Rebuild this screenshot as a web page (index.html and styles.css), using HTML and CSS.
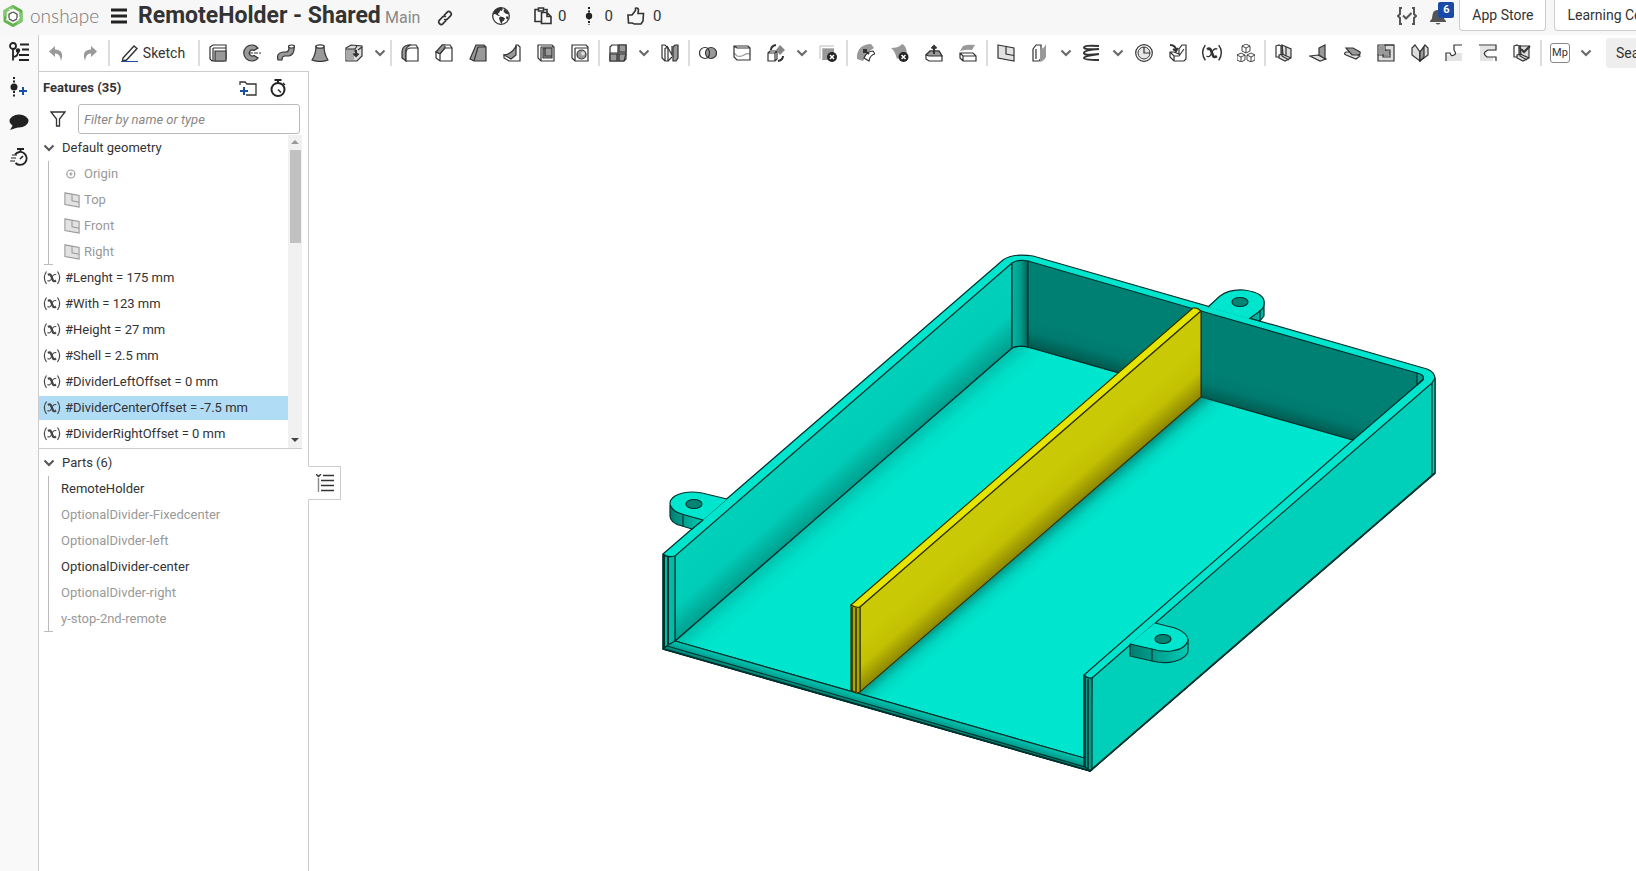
FILE: index.html
```html
<!DOCTYPE html>
<html lang="en">
<head>
<meta charset="utf-8">
<title>RemoteHolder - Shared</title>
<link rel="stylesheet" href="styles.css">
</head>
<body>
<svg class="defs" aria-hidden="true">
  <symbol id="chev" viewBox="0 0 12 8"><path d="M1.500 1.500L6 6l4.500-4.500" fill="none" stroke="currentColor" stroke-width="2"/></symbol>
  <symbol id="plane" viewBox="0 0 18 18"><path d="M1 1l16 3v13L1 14z" fill="#e2e2e2" stroke="currentColor" stroke-width="1.200"/><path d="M9 2.500V10l8 1.500" fill="none" stroke="currentColor" stroke-width="1.200"/></symbol>
  <symbol id="varx" viewBox="0 0 18 18"><path d="M3.500 2.500Q-.8 8.500 3.500 15M14.500 2.500Q18.800 8.500 14.500 15" fill="none" stroke="currentColor" stroke-width="1.200"/><path d="M5 6q2-1.500 3 .5l2 5q.8 1.500 3 0" fill="none" stroke="currentColor" stroke-width="2.200"/><path d="M13.300 5.800q-2-1-3.600 1.200L8 10.500q-1.500 2.400-3.500 1" fill="none" stroke="currentColor" stroke-width="1.100"/></symbol>
</svg>

<header class="topbar">
  <a class="brand" href="#">
    <svg class="logo" viewBox="0 0 20 22"><path d="M10 1.500l8 4.700v9.600l-8 4.700-8-4.700V6.200z" fill="none" stroke="#5fb54a" stroke-width="3"/><path d="M10 1.500L2 6.200v5M18 8v7.800l-4 2.400" fill="none" stroke="#82c86f" stroke-width="3"/><path d="M10 7l4 2.200v4.600L10 16l-4-2.200V9.200z" fill="#fff" stroke="#555" stroke-width="1.300"/><path d="M6 4l4 2.500M17 12l-3 2M3 15l3-1.500" stroke="#fff" stroke-width="1"/></svg>
    <span class="wordmark">onshape</span>
  </a>
  <button class="bare menu" aria-label="Menu"><svg viewBox="0 0 16 16"><path d="M0 2h16M0 8h16M0 14h16" stroke="#222" stroke-width="3"/></svg></button>
  <h1 class="title">RemoteHolder - Shared</h1>
  <span class="branch">Main</span>
  <button class="bare link" aria-label="Copy link"><svg viewBox="0 0 16 16" fill="none" stroke="#333" stroke-width="1.700"><path d="M7 5.500L10 2.300c1.300-1.300 2.500-1 3.500 0s1.200 2.200 0 3.500L10.500 9c-1.200 1-2.300 1-3.300.2M9 10.500l-3 3.200c-1.200 1.200-2.500 1-3.500 0s-1.200-2.300 0-3.500L5.500 7c1.200-1 2.300-1 3.300-.2"/></svg></button>
  <svg class="globe" viewBox="0 0 18 18"><circle cx="9" cy="9" r="8.300" fill="#fff" stroke="#333" stroke-width="1.300"/><path d="M2 4q3-4 7.500-3.500L11 2 9.500 4 8 3.500 7.500 5.500 6 6.500 6.500 8l2 .5-2 .5L3 7 1 7.500zM12 2l4 2.500.5 3-3-1-2-2zM8 9.500l3 .5 2 1.500-1 2-1.500 1L9.500 17 8 14.500 7 11zM14.500 9l2 1-1 3-1.500-2z" fill="#333"/></svg>
  <span class="stat copies"><svg viewBox="0 0 18 18" fill="none" stroke="#333" stroke-width="1.600"><path d="M7 14.500H1v-12h3m6 0h3V5M4.500 1h5v3h-5z"/><path d="M7.500 5.500H13l4 4v7H7.500zM13 5.500v4h4" fill="#f7f7f7"/></svg>0</span>
  <span class="stat versions"><svg viewBox="0 0 10 18"><path d="M5 0v18" stroke="#222" stroke-width="2" stroke-dasharray="2 1.500"/><circle cx="5" cy="9" r="3.200" fill="#222"/></svg>0</span>
  <span class="stat likes"><svg viewBox="0 0 18 18" fill="none" stroke="#333" stroke-width="1.600"><path d="M1 8h4l3.500-4.500V1.200q2.500-.7 3 1.800L11 6.500h5.500L16 14l-2 3H7.500L5 16H1.500z"/></svg>0</span>
  <div class="actions">
    <button class="bare script" aria-label="Scripts"><svg viewBox="0 0 20 18" fill="none" stroke="#555" stroke-width="2"><path d="M5 1H3v6L1 9l2 2v6h2M15 1h2v6l2 2-2 2v6h-2M6 8.500l3 3L14.500 6"/></svg></button>
    <button class="bare bell" aria-label="Notifications"><svg viewBox="0 0 18 18"><path d="M1 14q2.500-2 2.500-6Q4 3 9 3t5.500 5q0 4 2.500 6v1H1zM6.500 16h5q-2.500 3-5 0z" fill="#555"/></svg><span class="badge">6</span></button>
    <button class="boxed">App Store</button>
    <button class="boxed">Learning Center</button>
  </div>
</header>

<div class="app">
  <nav class="rail">
    <button class="bare" aria-label="Feature list"><svg viewBox="0 0 20 20" fill="none" stroke="#222" stroke-width="1.800"><circle cx="4" cy="4" r="3"/><path d="M4 7v11.500M4 15q5-.5 5-5M11 2.500h9M13 7.500h7M10 13h10M10 18h10"/><circle cx="9" cy="8.500" r="1.300" fill="#222"/></svg></button>
    <button class="bare" aria-label="Versions"><svg viewBox="0 0 20 20"><path d="M5 0v20" stroke="#222" stroke-width="2" stroke-dasharray="2 1.500"/><circle cx="5" cy="10" r="3.500" fill="#222"/><path d="M14 10v8M10 14h8" stroke="#1b4fa0" stroke-width="2"/></svg></button>
    <button class="bare" aria-label="Comments"><svg viewBox="0 0 20 20"><ellipse cx="10" cy="9" rx="9.500" ry="6.500" fill="#222"/><path d="M4 13l-3 5 9-3z" fill="#222"/></svg></button>
    <button class="bare" aria-label="Performance"><svg viewBox="0 0 20 20" fill="none" stroke="#222"><path d="M6 7.500A6.500 6.500 0 1 1 6.500 16" stroke-width="1.800"/><path d="M8 2h7M11.500 2v3" stroke-width="1.800"/><path d="M3 8h5M2 11h5M1 14h5" stroke-width="1.200"/><path d="M11 12l3-3" stroke-width="1.600"/></svg></button>
  </nav>

  <div class="work">
    <div class="toolbar">
      <button class="tool gray" aria-label="Undo"><svg viewBox="0 0 18 18"><path d="M8 2L2 7.500 8 13V9.500q5-.5 6 7.500 4-11-6-11.500z" fill="currentColor"/></svg></button>
      <button class="tool gray" aria-label="Redo"><svg viewBox="0 0 18 18"><path d="M10 2l6 5.500-6 5.500V9.500q-5-.5-6 7.500Q0 6 10 5.500z" fill="currentColor"/></svg></button>
      <i class="sep"></i>
      <button class="sketch"><svg viewBox="0 0 18 18"><path d="M2 14L13 2l3 2.500L5.500 16 1.500 17z" fill="#fff" stroke="#333" stroke-width="1.400"/><path d="M0 17.500h17" stroke="#1b4fa0"/></svg>Sketch</button>
      <i class="sep"></i>
      <button class="tool" aria-label="Extrude"><svg viewBox="0 0 18 18"><path class="w" d="M1 3l3-2h13v14l-2 2H3l-2-2zM4 4h13M4 4v13"/><path class="g" d="M6 7h11v10H6z"/></svg></button>
      <button class="tool" aria-label="Revolve"><svg viewBox="0 0 18 18"><path class="g" d="M15 4A8 8 0 1 0 15 14L11 11.500a3 3 0 1 1 0-5z"/><path class="l" d="M6 9h12" stroke-dasharray="4 1"/></svg></button>
      <button class="tool" aria-label="Sweep"><svg viewBox="0 0 18 18"><path class="g" d="M1 16q-2-7 5-8h3q3 0 3-5l5-1q1 8-5 10H8q-3 0-3 4z"/><ellipse class="w" cx="14.500" cy="2.500" rx="3" ry="1.500"/></svg></button>
      <button class="tool" aria-label="Loft"><svg viewBox="0 0 18 18"><path class="g" d="M5 2q0 8-4 14 8 3 16 0-4-6-4-14z"/><ellipse class="w" cx="9" cy="2.500" rx="4" ry="1.700"/></svg></button>
      <button class="tool" aria-label="Thicken"><svg viewBox="0 0 18 18"><path class="h" d="M1 4l5-3 11 1v10l-5 5H1z"/><path d="M1 5h8v11H1z" fill="#aaa"/><path class="l" d="M1 5h9l2-3M10 5v3M13 6l4-3"/><path d="M11 6v6M8.500 9.500L11 12l2.500-2.500" class="d"/></svg></button>
      <button class="drop" aria-label="More solids"><svg><use href="#chev"/></svg></button>
      <i class="sep"></i>
      <button class="tool" aria-label="Fillet"><svg viewBox="0 0 18 18"><path class="g" d="M1 8q0-6 6-7h3Q4 3 5 8v9l-4-3z"/><path class="w" d="M5 17V9q0-5 5-5h7v13zM8 1h7l2 3"/></svg></button>
      <button class="tool" aria-label="Chamfer"><svg viewBox="0 0 18 18"><path class="g" d="M1 8l6-7h3v3l-5 6-4-2z"/><path class="w" d="M1 8l4 2 5-6h7v13H5l-4-3zM5 10v7M7 1h8l2 3"/></svg></button>
      <button class="tool" aria-label="Draft"><svg viewBox="0 0 18 18"><path class="g" d="M7 1h8l2 2v14H5l-4-2zM9 3L5 17M9 3h8"/></svg></button>
      <button class="tool" aria-label="Rib"><svg viewBox="0 0 18 18"><path class="w" d="M13 1h2l2 2v14H6l-5-3v-3h5l7-7z"/><path class="g" d="M1 11Q9 10 13 2v9l-5 4z"/></svg></button>
      <button class="tool" aria-label="Shell"><svg viewBox="0 0 18 18"><path class="w" d="M1 1h14l2 2v14H4l-3-3zM4 3h13M4 3v14"/><path class="g" d="M6 4h9v10H6z"/><path class="l" d="M8 4v8h7"/></svg></button>
      <button class="tool" aria-label="Hole"><svg viewBox="0 0 18 18"><path class="w" d="M1 1h14l2 2v14H4l-3-3zM4 4h13M4 4v13"/><circle class="g" cx="10.500" cy="10.500" r="4.500"/><circle cx="12" cy="9.500" r="2" fill="#ddd"/></svg></button>
      <i class="sep"></i>
      <button class="tool" aria-label="Linear pattern"><svg viewBox="0 0 18 18"><path class="w" d="M1 3l2-2h14v14l-2 2H1z"/><path class="g" d="M10 1h7v7h-7zM1 10h7v7H1zM10 10h7l-2 7h-5z"/><path class="l" d="M1 9h16M9 1v16"/></svg></button>
      <button class="drop" aria-label="More patterns"><svg><use href="#chev"/></svg></button>
      <button class="tool" aria-label="Mirror"><svg viewBox="0 0 18 18"><path class="w" d="M1 1h3l3 3v13H4l-3-3zM4 4h3M4 4v13"/><path class="g" d="M12 3l2-2h3v13l-2 3h-3z"/><path class="l" d="M6 2l5 9V2M7 17l4-4"/></svg></button>
      <i class="sep"></i>
      <button class="tool" aria-label="Boolean"><svg viewBox="0 0 18 18"><circle class="w" cx="6" cy="9" r="5.500"/><circle class="g" cx="12" cy="9" r="5.500"/><path class="l" d="M9 4.500q3 4.500 0 9"/></svg></button>
      <button class="tool" aria-label="Split"><svg viewBox="0 0 18 18"><path class="w" d="M1 2h14l2 2v12H4l-3-3zM1 2l3 2h13"/><path class="l" d="M1 9l3 3q4 1 7-1t6-1" stroke-opacity=".5"/></svg></button>
      <button class="tool" aria-label="Transform"><svg viewBox="0 0 18 18"><path class="w" d="M1 9l2-2h7v8l-2 2H1zM1 9h7v8M8 9l2-2"/><path d="M13 1l5 5-5 5-4-5z" fill="#888"/><path class="d" d="M4 6q0-4 5-5M16 12q0 4-5 5"/></svg></button>
      <button class="drop" aria-label="More transforms"><svg><use href="#chev"/></svg></button>
      <button class="tool" aria-label="Delete part"><svg viewBox="0 0 18 18"><path d="M3 4h12v12H3z" fill="#999"/><path d="M1 15V2h14M3.500 5v10M3 4.500h12" stroke="#bbb" fill="none"/><circle cx="13" cy="13" r="5" fill="#222"/><path d="M11 11l4 4m0-4l-4 4" stroke="#fff" stroke-width="1.500"/></svg></button>
      <i class="sep"></i>
      <button class="tool" aria-label="Modify fillet"><svg viewBox="0 0 18 18"><path d="M0 15Q-1 1 14 0l3 4-6 4-5 9z" fill="#999"/><path class="w" d="M7 14q3-7 9-7l2 3q-5 1-6 7z"/><path class="d" d="M12 10L7 6M7 9V6h3"/></svg></button>
      <button class="tool" aria-label="Delete face"><svg viewBox="0 0 18 18"><path d="M0 4q8 0 11-4 4 1 5 9l-10 6Q4 7 0 4z" fill="#999"/><circle cx="12.500" cy="13" r="5" fill="#222"/><path d="M10.500 11l4 4m0-4l-4 4" stroke="#fff" stroke-width="1.500"/></svg></button>
      <button class="tool" aria-label="Move face"><svg viewBox="0 0 18 18"><path class="w" d="M1 11l4-4h9l3 5v5H4l-3-2z"/><path class="g" d="M1 11l4-4h9l3 5H4z"/><path class="d" d="M9 10V2M6.500 4.500L9 2l2.500 2.500"/></svg></button>
      <button class="tool" aria-label="Replace face"><svg viewBox="0 0 18 18"><path class="w" d="M1 9h13l3 3v5H4l-3-3zM1 9l3 3h13M4 12v5"/><path d="M4 2q5-2 12-1l-3 5q-5-1-12 1z" fill="#999"/></svg></button>
      <i class="sep"></i>
      <button class="tool" aria-label="Plane"><svg><use href="#plane"/></svg></button>
      <button class="tool" aria-label="Offset surface"><svg viewBox="0 0 18 18"><path class="w" d="M2 5l3-4h5v13l-2 3H2zM5 5v10"/><path d="M9 5q4 0 6-5v13q-2 4-6 5z" fill="#999"/></svg></button>
      <button class="drop" aria-label="More surfaces"><svg><use href="#chev"/></svg></button>
      <button class="tool" aria-label="Helix"><svg viewBox="0 0 18 18"><path class="d" d="M16 2Q1 1 1 3.500t15 1.500Q1 6 1 9t15 1Q1 12 1 14t15 2"/></svg></button>
      <button class="drop" aria-label="More curves"><svg><use href="#chev"/></svg></button>
      <button class="tool" aria-label="Mate connector"><svg viewBox="0 0 18 18"><circle class="w" cx="9" cy="9" r="8.300"/><circle cx="9" cy="9" r="6" fill="#e6e6e6" stroke="#333"/><path class="l" d="M9 3v6h6"/></svg></button>
      <button class="tool" aria-label="Derived"><svg viewBox="0 0 18 18"><path class="w" d="M1 8h4l5 2V5l3-4h4v14l-2 2H5l-4-4zM1 8l4 4h5l5-7M5 12v5"/><path class="d" d="M1 1q6 0 6 6M4 5l3 2 2-3"/></svg></button>
      <button class="tool big" aria-label="Variable"><svg><use href="#varx"/></svg></button>
      <button class="tool" aria-label="Composite part"><svg viewBox="0 0 18 18"><path class="thin" d="M5 2l4-2 4 2v5L9 9 5 7zM5 2l4 2 4-2M9 4v5M0 11l4-2 4 2v5l-4 2-4-2zM0 11l4 2 4-2M4 13v5M10 11l4-2 4 2v5l-4 2-4-2zM10 11l4 2 4-2M14 13v5"/></svg></button>
      <i class="sep"></i>
      <button class="tool" aria-label="Sheet metal model"><svg viewBox="0 0 18 18"><path class="w" d="M1 2l3-1 2 1v10l-2 1H1z"/><path class="h" d="M7 1l9 4v9l-6 3-6-3v-3l4-1z"/><path class="l" d="M7 1v11l7 4M7 10l9 4M11 3v9"/></svg></button>
      <button class="tool" aria-label="Flange"><svg viewBox="0 0 18 18"><path class="h" d="M1 12l8-1 8 4-6 2z"/><path class="g" d="M10 4l6-3v14l-6-4z"/></svg></button>
      <button class="tool" aria-label="Hem"><svg viewBox="0 0 18 18"><path class="h" d="M3 11q-3-1 0-3h7l7 4-4 3z"/><path class="g" d="M3 4h7l7 4q1 3-3 3H9z"/></svg></button>
      <button class="tool" aria-label="Tab"><svg viewBox="0 0 18 18"><path class="h" d="M8 1h9v16H1v-6h9q2 0 2-2t-2-2H8z"/><path d="M2 2h6v5h5v4H2z" fill="#999"/><path class="l" d="M1 11V1h16M8 6h5v7H6v-3"/></svg></button>
      <button class="tool" aria-label="Bend"><svg viewBox="0 0 18 18"><path class="h" d="M1 4l3-3 5 7v9l-8-6z"/><path class="h" d="M9 8l5-7 3 3v7l-8 6z"/><path class="g" d="M9 8l4-5v10l-4 4z"/></svg></button>
      <button class="tool" aria-label="Corner"><svg viewBox="0 0 18 18"><path d="M10 9h7v8H2v-6q9 3 8-5z" fill="#e4e4e4"/><path class="l" d="M17 1H9v5q3 4 0 5-3 2-4-2H1v8"/></svg></button>
      <button class="tool" aria-label="Bend relief"><svg viewBox="0 0 18 18"><path d="M1 2h16v5H9q-4 3 0 6h5v4H1z" fill="#e4e4e4"/><path class="l" d="M0 1h17v5H9q-7 3-1 7h9v4"/></svg></button>
      <button class="tool" aria-label="Finish sheet metal"><svg viewBox="0 0 18 18"><path class="w" d="M1 2l3-1 2 1v10l-2 1H1z"/><path class="h" d="M7 2h9v12l-6 3-6-3v-3l4-1z"/><path class="l" d="M7 1v11l7 4M7 10l9 4"/><path class="d" d="M8 5l3 3 6-6"/></svg></button>
      <i class="sep"></i>
      <button class="tool" aria-label="Custom feature Mp"><span class="mp">Mp</span></button>
      <button class="drop" aria-label="Custom features"><svg><use href="#chev"/></svg></button>
      <button class="search">Search tools</button>
    </div>

    <div class="stage">
      <aside class="panel">
        <div class="panel-head">
          <h2>Features (35)</h2>
          <button class="bare" aria-label="Add folder"><svg viewBox="0 0 18 18" fill="none"><path d="M1 6V3h5l2 2h9v11H7" stroke="#333" stroke-width="1.300"/><path d="M5 8v8M1 12h8" stroke="#1b4fa0" stroke-width="2"/></svg></button>
          <button class="bare" aria-label="Regeneration times"><svg viewBox="0 0 18 18" fill="none" stroke="#222"><circle cx="9" cy="10.500" r="6.500" stroke-width="2"/><path d="M5.500 1h7M9 1v3" stroke-width="2"/><path d="M9 10.500l3 3M14 4l2 2" stroke-width="1.400"/></svg></button>
        </div>
        <div class="filter">
          <svg viewBox="0 0 16 16"><path d="M1 1h14L9.500 8v7h-3V8z" fill="none" stroke="#333" stroke-width="1.300"/></svg>
          <input type="text" placeholder="Filter by name or type" aria-label="Filter by name or type">
        </div>
        <div class="list">
          <div class="rows">
            <button class="row group"><svg><use href="#chev"/></svg>Default geometry</button>
            <ul class="tree">
              <li class="row dim"><svg viewBox="0 0 14 14" fill="none" stroke="#999"><circle cx="6" cy="7" r="3.500"/><path d="M4.500 7h3M6 5.500v3"/></svg>Origin</li>
              <li class="row dim"><svg><use href="#plane"/></svg>Top</li>
              <li class="row dim"><svg><use href="#plane"/></svg>Front</li>
              <li class="row dim"><svg><use href="#plane"/></svg>Right</li>
            </ul>
            <ul class="vars">
              <li class="row"><svg><use href="#varx"/></svg>#Lenght = 175 mm</li>
              <li class="row"><svg><use href="#varx"/></svg>#With = 123 mm</li>
              <li class="row"><svg><use href="#varx"/></svg>#Height = 27 mm</li>
              <li class="row"><svg><use href="#varx"/></svg>#Shell = 2.5 mm</li>
              <li class="row"><svg><use href="#varx"/></svg>#DividerLeftOffset = 0 mm</li>
              <li class="row on"><svg><use href="#varx"/></svg>#DividerCenterOffset = -7.5 mm</li>
              <li class="row"><svg><use href="#varx"/></svg>#DividerRightOffset = 0 mm</li>
            </ul>
          </div>
          <div class="scroll"><i class="up"></i><i class="thumb"></i><i class="down"></i></div>
        </div>
        <div class="parts">
          <button class="row group"><svg><use href="#chev"/></svg>Parts (6)</button>
          <ul class="tree">
            <li class="row">RemoteHolder</li>
            <li class="row dim">OptionalDivider-Fixedcenter</li>
            <li class="row dim">OptionalDivder-left</li>
            <li class="row">OptionalDivider-center</li>
            <li class="row dim">OptionalDivder-right</li>
            <li class="row dim">y-stop-2nd-remote</li>
          </ul>
        </div>
      </aside>

      <main class="canvas">
        <button class="tab" aria-label="Toggle feature list"><svg viewBox="0 0 18 18" fill="none" stroke="#333" stroke-width="1.400"><path d="M0 0l2.500 2.500L5 0M7 1.500h11M5 6.500h13M5 11.500h13M5 16.500h13"/><path d="M2.500 4v14" stroke="#888"/></svg></button>
        <svg class="model" viewBox="309 71 1327 800" role="img" aria-label="Remote holder with centre divider">
          <defs>
            <linearGradient id="gWall" gradientUnits="userSpaceOnUse" x1="801" y1="446" x2="843" y2="494"><stop offset="0" stop-color="#00d0ba"/><stop offset=".6" stop-color="#00cdb7"/><stop offset="1" stop-color="#00a090"/></linearGradient>
            <linearGradient id="gFloor" gradientUnits="userSpaceOnUse" x1="843" y1="494" x2="863" y2="517"><stop offset="0" stop-color="#00bfab"/><stop offset=".5" stop-color="#00dec7"/><stop offset="1" stop-color="#00e6ce"/></linearGradient>
            <linearGradient id="gShade" gradientUnits="userSpaceOnUse" x1="1030" y1="545" x2="1048" y2="566"><stop offset="0" stop-color="#005f55" stop-opacity=".6"/><stop offset=".4" stop-color="#008f80" stop-opacity=".2"/><stop offset="1" stop-color="#00e6ce" stop-opacity="0"/></linearGradient>
            <linearGradient id="gYel" gradientUnits="userSpaceOnUse" x1="1004" y1="515" x2="1030" y2="545"><stop offset="0" stop-color="#c9c905"/><stop offset=".5" stop-color="#c2c002"/><stop offset="1" stop-color="#8d8700"/></linearGradient>
            <linearGradient id="gBack" gradientUnits="userSpaceOnUse" x1="1285" y1="391" x2="1277" y2="419"><stop offset="0" stop-color="#008073"/><stop offset=".5" stop-color="#007a6e"/><stop offset="1" stop-color="#005a50"/></linearGradient>
            <linearGradient id="gBackL" gradientUnits="userSpaceOnUse" x1="1081" y1="331" x2="1073" y2="359"><stop offset="0" stop-color="#008073"/><stop offset=".5" stop-color="#007a6e"/><stop offset="1" stop-color="#005a50"/></linearGradient>
            <linearGradient id="gCorner"><stop offset="0" stop-color="#00b5a2"/><stop offset=".5" stop-color="#00a08f"/><stop offset="1" stop-color="#005f56"/></linearGradient>
            <linearGradient id="gLip" gradientUnits="userSpaceOnUse" x1="872" y1="697" x2="868" y2="711"><stop offset="0" stop-color="#00c8b4"/><stop offset=".5" stop-color="#009f8e"/><stop offset="1" stop-color="#00463f"/></linearGradient>
            <linearGradient id="gSide"><stop offset="0" stop-color="#007d70"/><stop offset=".5" stop-color="#00a593"/><stop offset="1" stop-color="#00cbb6"/></linearGradient>
          </defs>
          <g stroke="#00322d" stroke-width="1.200" stroke-linejoin="round">
            <path d="M663 554L1003 260Q1013 253 1033 256L1427 369Q1435 372 1435 379V473L1090 771 663 649z" fill="#00e6ce"/>
            <path d="M675 641L1012 348Q1018 345 1028 347L1353 440 1084 675V758z" fill="url(#gFloor)"/>
            <path d="M675 556L1012 263V348L675 641z" fill="url(#gWall)"/>
            <path d="M1012 263Q1018 259 1028 261V347Q1018 345 1012 348z" fill="url(#gCorner)"/>
            <path d="M1028 261L1201 311V396L1028 347z" fill="url(#gBackL)"/>
            <path d="M1201 311L1417 373Q1425 376 1423 380L1417 385 1353 440 1201 397z" fill="url(#gBack)"/>
            <path d="M1417 373v12l6-6q2-4-6-6z" fill="#009b8b"/>
            <path d="M1201 397l40 11L885 716l-25-23z" fill="url(#gShade)" stroke="none"/>
            <path d="M663 554q4 4 12 2V641l-12 8z" fill="#00b9a6"/>
            <path d="M664 555v94M668 557v88" stroke-width="2"/>
            <path d="M668 645L675 641 1084 758 1090 771 663 649z" fill="url(#gLip)"/>
            <path d="M667 646l418 121M664 649l426 122" fill="none"/>
            <path d="M1092 678L1432 383 1435 378V473L1090 771z" fill="#00cfba"/>
            <path d="M1432 383v92" fill="none"/>
            <path d="M1084 675q4 4 8 3v92l-2 1-6-5z" fill="#009b8b"/>
            <path d="M1085 677v90M1088 679v91" stroke-width="1.600"/>
            <path d="M851 605L1193 308q4-1 8 3L860 607q-5 2-9-2z" fill="#e5e500" stroke="#343200"/>
            <path d="M860 607L1201 311V397L860 692z" fill="url(#gYel)" stroke="#343200"/>
            <path d="M851 605q4 3 9 2V692l-4 1-5-3z" fill="#aaa600" stroke="#343200"/>
            <path d="M852 607v84M856 608v84" stroke="#343200" stroke-width="1.600"/>
            <path d="M670 505V516Q670 523 682 526L692 529 703 520 683 514z" fill="url(#gSide)"/>
            <path d="M727 499L702 493Q686 490 675 496 665 503 675 511 678 513 685 515L703 520" fill="#00e6ce"/>
            <path d="M683 515v11" fill="none"/>
            <path d="M1264 302v14l-4 5-11-3z" fill="#00b5a2"/>
            <path d="M1208 307L1220 296Q1229 289 1244 290 1266 293 1264 304 1264 308 1260 311L1249 319" fill="#00e6ce"/>
            <path d="M1260 310v11" fill="none"/>
            <path d="M1130 644V656L1152 661Q1169 665 1181 659 1188 655 1188 651V639z" fill="url(#gSide)"/>
            <path d="M1155 623L1175 628Q1188 633 1188 640 1186 649 1171 651 1161 652 1152 649L1130 644" fill="#00e6ce"/>
            <path d="M1152 649v12" fill="none"/>
            <g fill="#008575"><ellipse cx="694" cy="504" rx="8" ry="4.500"/><ellipse cx="1240" cy="302" rx="8" ry="4.500"/><ellipse cx="1163" cy="639" rx="8" ry="4.500"/></g>
            <path d="M663 649l427 122L1435 473" fill="none" stroke-width="1.800"/>
          </g>
        </svg>
      </main>
    </div>
  </div>
</div>
</body>
</html>
```
FILE: styles.css
```css
* { box-sizing: border-box; }
html, body { height: 100%; }
body {
  margin: 0;
  display: flex;
  flex-direction: column;
  overflow: hidden;
  background: #fff;
  color: #333;
  font: 13px/16px Roboto, "Liberation Sans", sans-serif;
}
button {
  margin: 0;
  padding: 0;
  border: 0;
  background: none;
  color: inherit;
  font: inherit;
}
svg { display: block; flex: none; }
ul { margin: 0; padding: 0; list-style: none; }
.defs { position: absolute; width: 0; height: 0; }
.bare { display: flex; align-items: center; justify-content: center; flex: none; }

/* Header */
.topbar {
  display: flex;
  align-items: center;
  flex: none;
  height: 35px;
  padding-left: 3px;
  padding-bottom: 4px;
  background: #f7f7f7;
  overflow: hidden;
  white-space: nowrap;
}
.brand { display: flex; align-items: center; gap: 7px; width: 108px; text-decoration: none; }
.logo { width: 20px; height: 22px; }
.wordmark { color: #777; font: 300 19px/24px Lato, sans-serif; }
.menu svg { width: 16px; height: 16px; }
.title { width: 247px; margin: 0 0 0 11px; color: #333; font-size: 23px; line-height: 28px; font-weight: 700; }
.branch { width: 52px; padding-top: 4px; color: #888; font-size: 16px; line-height: 20px; }
.link { width: 16px; padding-top: 4px; }
.link svg { width: 16px; height: 16px; }
.globe { width: 18px; height: 18px; margin-left: 39px; }
.stat { display: flex; align-items: center; gap: 6px; font-size: 15px; line-height: 20px; }
.stat svg { width: 18px; height: 18px; }
.copies { margin-left: 24px; }
.versions { margin-left: 18px; gap: 10px; }
.versions svg { width: 10px; }
.likes { margin-left: 14px; gap: 8px; }
.actions { display: flex; align-items: center; align-self: stretch; flex: none; margin-left: auto; margin-right: -51px; }
.script { margin-right: 12px; }
.script svg { width: 20px; height: 18px; }
.bell { position: relative; width: 18px; margin-right: 12px; }
.bell svg { width: 18px; height: 20px; }
.badge {
  position: absolute;
  left: 9px;
  top: -4px;
  width: 16px;
  border-radius: 2px;
  background: #1a4aa8;
  color: #fff;
  font-size: 11px;
  line-height: 16px;
  font-weight: 700;
}
.boxed {
  align-self: stretch;
  margin-right: 8px;
  padding: 0 12px;
  border: 1px solid #ccc;
  border-top: 0;
  border-radius: 0 0 4px 4px;
  background: #fff;
  font-size: 14px;
}

/* Layout */
.app { display: flex; flex: 1; min-height: 0; }
.rail {
  display: flex;
  flex-direction: column;
  gap: 15px;
  flex: none;
  width: 39px;
  padding-top: 7px;
  border-right: 1px solid #ccc;
  background: #f9f9f9;
}
.rail svg { width: 20px; height: 20px; }
.work { display: flex; flex-direction: column; flex: 1; min-width: 0; }

/* Toolbar */
.toolbar { display: flex; align-items: center; flex: none; height: 36px; overflow: hidden; white-space: nowrap; }
.tool { display: flex; align-items: center; justify-content: center; flex: none; width: 34px; height: 34px; }
.tool svg { width: 18px; height: 18px; }
.tool.big svg { width: 22px; height: 22px; }
.gray { color: #999; }
.drop { display: flex; align-items: center; justify-content: center; flex: none; width: 18px; height: 34px; color: #666; }
.drop svg { width: 12px; height: 8px; }
.sep { flex: none; width: 2px; height: 26px; margin: 0 1px; background: #ddd; }
.sketch { display: flex; align-items: center; justify-content: center; gap: 4px; flex: none; width: 86px; padding-right: 2px; font-size: 14px; }
.sketch svg { width: 18px; height: 18px; }
.mp { padding: 1px; border: 1px solid #888; border-radius: 3px; font-size: 11px; line-height: 16px; }
.search { flex: none; height: 30px; margin-left: 11px; padding: 0 10px; background: #eee; border-radius: 3px; font-size: 14px; }
.w, .g, .h, .l, .d, .thin { stroke: #333; stroke-width: 1.2; }
.w { fill: #fff; }
.g { fill: #999; }
.h { fill: #ddd; }
.l, .d, .thin { fill: none; }
.d { stroke-width: 2; }
.thin { stroke-width: 0.9; }

/* Feature panel */
.stage { display: flex; flex: 1; min-height: 0; }
.panel { flex: none; width: 270px; padding-right: 6px; border: solid #ccc; border-width: 1px 1px 0 0; }
.panel-head { display: flex; align-items: center; gap: 12px; height: 32px; padding: 0 15px 0 4px; }
.panel-head h2 { flex: 1; margin: 0; font-size: 13px; font-weight: 700; }
.panel-head svg { width: 18px; height: 18px; }
.filter { display: flex; align-items: center; gap: 12px; padding: 0 2px 1px 11px; }
.filter svg { width: 16px; height: 16px; }
.filter input {
  flex: 1;
  min-width: 0;
  height: 30px;
  padding: 0 5px;
  border: 1px solid #bbb;
  border-radius: 3px;
  background: #fff;
  color: #333;
  font: 13px/16px Roboto, sans-serif;
}
.filter input::placeholder { color: #888; font-style: italic; }
.list { display: flex; border-bottom: 1px solid #ccc; }
.rows { flex: 1; min-width: 0; padding-bottom: 1px; }
.row { display: flex; align-items: center; height: 26px; white-space: nowrap; }
.group { gap: 7px; width: 100%; padding-left: 4px; }
.group svg { width: 12px; height: 8px; color: #555; }
.tree { position: relative; padding-left: 22px; }
.tree::before { content: ""; position: absolute; left: 9px; top: 0; bottom: 1px; width: 1px; background: #bbb; }
.tree::after { content: ""; position: absolute; left: 5px; bottom: 0; width: 9px; height: 1px; background: #bbb; }
.dim { color: #999; }
.rows .tree { padding-left: 25px; }
.rows .tree svg { width: 16px; height: 16px; margin-right: 4px; }
.vars { display: flex; flex-direction: column; gap: 2px; padding: 1px 0; }
.vars .row { height: 24px; padding-left: 4px; }
.vars svg { width: 18px; height: 18px; margin-right: 4px; color: #444; }
.on { background: #b0dcf5; }
.scroll { display: flex; flex-direction: column; align-items: center; flex: none; width: 14px; background: #f1f1f1; }
.thumb { width: 11px; height: 93px; margin-top: 6px; background: #c1c1c1; }
.up, .down { border: 4px solid transparent; border-top-width: 0; border-bottom: 4px solid #999; }
.up { margin-top: 5px; }
.down { margin-top: auto; margin-bottom: 6px; border-top: 4px solid #444; border-bottom-width: 0; }
.parts { padding-top: 1px; }

/* 3D view */
.canvas { position: relative; flex: 1; min-width: 0; }
.model { width: 100%; height: 100%; }
.tab {
  position: absolute;
  left: -1px;
  top: 395px;
  display: flex;
  align-items: center;
  justify-content: center;
  width: 33px;
  height: 34px;
  border: 1px solid #ccc;
  border-left-color: #fff;
  background: #fff;
}
.tab svg { width: 18px; height: 18px; }
```
